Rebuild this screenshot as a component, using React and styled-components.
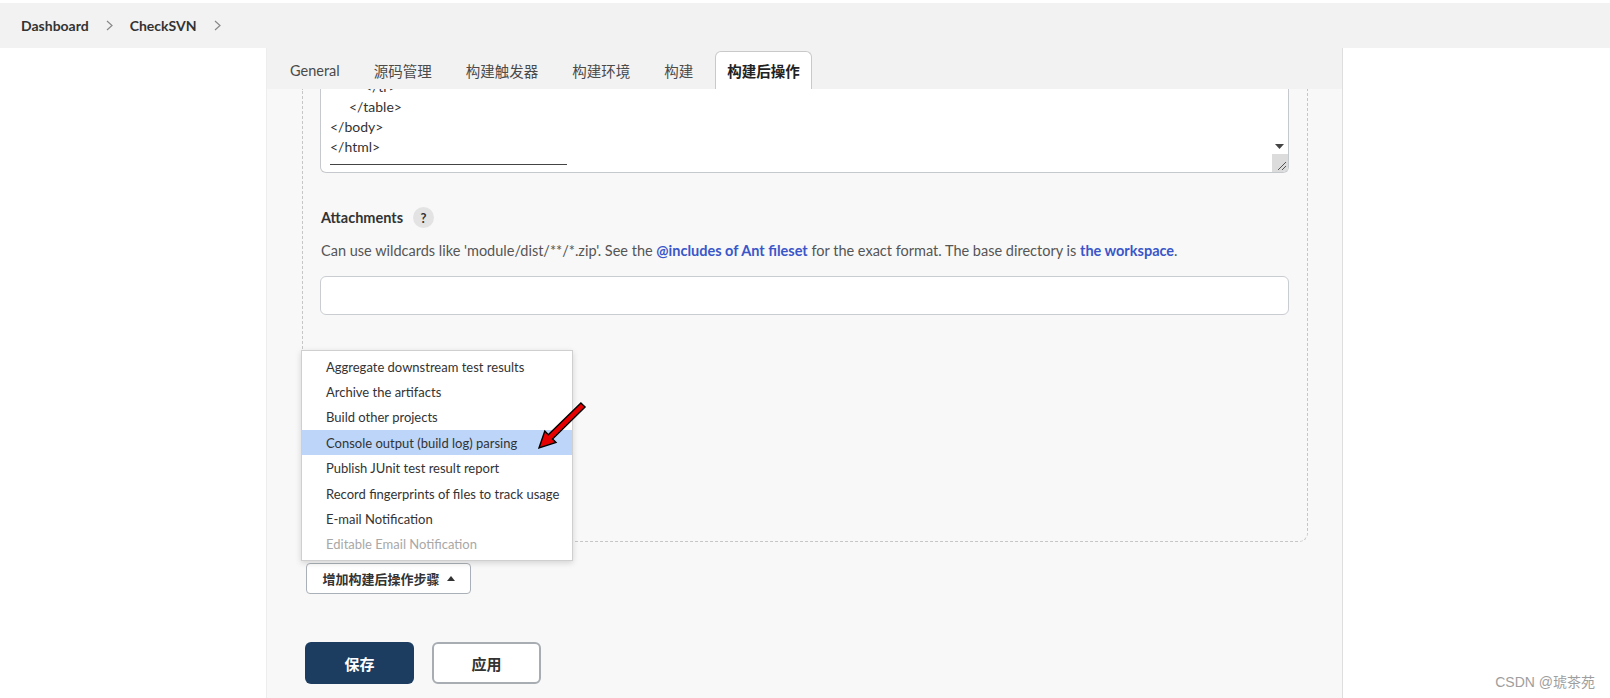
import React from "react";
import styled, { createGlobalStyle } from "styled-components";

const GlobalStyle = createGlobalStyle`
  html, body { margin: 0; padding: 0; background: #ffffff; }
  body {
    font-family: Lato, "Noto Sans CJK SC", sans-serif;
    color: #333;
    width: 1610px;
    height: 698px;
    overflow: hidden;
  }
  * { box-sizing: border-box; }
`;

const Page = styled.div`
  position: relative;
  width: 1610px;
  height: 698px;
  padding-top: 3px;
  display: flex;
  flex-direction: column;
`;

const Breadcrumb = styled.nav`
  height: 45px;
  background: #f2f2f2;
  display: flex;
  align-items: center;
  padding-left: 21px;
  gap: 17px;
  flex-shrink: 0;
`;

const Crumb = styled.span`
  font-weight: 700;
  font-size: 14px;
  color: #333;
`;

const Chevron = () => (
  <svg width="7" height="11" viewBox="0 0 7 11">
    <polyline points="1,1 6,5.5 1,10" fill="none" stroke="#888" strokeWidth="1.2" />
  </svg>
);

const Main = styled.div`
  flex: 1;
  display: flex;
  padding-left: 266px;
  min-height: 0;
`;

const Panel = styled.section`
  width: 1077px;
  background: #f8f8f8;
  border-left: 1px solid #ededed;
  border-right: 1px solid #dedede;
  display: flex;
  flex-direction: column;
`;

const TabBar = styled.div`
  height: 41px;
  background: #f2f2f2;
  display: flex;
  align-items: flex-end;
  padding-left: 11px;
  gap: 10px;
  flex-shrink: 0;
`;

const Tab = styled.div`
  height: 38px;
  display: flex;
  align-items: center;
  padding: 0 11px;
  font-size: 14.5px;
  color: ${(p) => (p.$active ? "#222" : "#4a4a4a")};
  font-weight: ${(p) => (p.$active ? 700 : 400)};
  background: ${(p) => (p.$active ? "#ffffff" : "transparent")};
  border: 1px solid ${(p) => (p.$active ? "#c9c9c9" : "transparent")};
  border-bottom: none;
  border-radius: 6px 6px 0 0;
`;

const Content = styled.div`
  flex: 1;
  padding: 0 34px 0 35px;
  display: flex;
  flex-direction: column;
`;

const Section = styled.div`
  border: 1px dashed #c6c6c6;
  border-top: none;
  border-radius: 0 0 9px 9px;
  padding: 0 18px 226px 17px;
`;

const CodeBox = styled.div`
  height: 84px;
  background: #ffffff;
  border: 1px solid #c5c9ce;
  border-top: none;
  border-radius: 0 0 6px 6px;
  display: flex;
  overflow: hidden;
`;

const CodeViewport = styled.div`
  flex: 1;
  overflow: hidden;
  padding-left: 9px;
`;

const CodeLines = styled.div`
  margin-top: -12px;
  font-size: 14px;
  line-height: 20px;
  color: #333;
`;

const CodeLine = styled.div`
  padding-left: ${(p) => p.$indent || 0}px;
  white-space: pre;
`;

const CodeRule = styled.div`
  width: 237px;
  height: 1px;
  background: #444;
  margin-top: 7px;
`;

const Scrollbar = styled.div`
  width: 17px;
  display: flex;
  flex-direction: column;
  justify-content: flex-end;
  align-items: center;
`;

const ScrollArrow = styled.div`
  height: 14px;
  display: flex;
  align-items: center;
  justify-content: center;
  margin-bottom: 1px;
`;

const Grip = styled.div`
  width: 16px;
  height: 18px;
  background: #dcdcdc;
  display: flex;
  align-items: flex-end;
  justify-content: flex-end;
  padding: 0 2px 2px 0;
`;

const FieldLabel = styled.div`
  margin-top: 34px;
  display: flex;
  align-items: center;
  gap: 10px;
  font-size: 14.5px;
  font-weight: 700;
  line-height: 20px;
  color: #333;
  padding-left: 1px;
`;

const HelpBadge = styled.span`
  width: 21px;
  height: 21px;
  border-radius: 50%;
  background: #e3e3e3;
  color: #333;
  font-size: 13px;
  font-weight: 700;
  display: inline-flex;
  align-items: center;
  justify-content: center;
`;

const Description = styled.div`
  margin-top: 13px;
  font-size: 14.5px;
  line-height: 20px;
  color: #555;
  padding-left: 1px;
`;

const Link = styled.a`
  color: #3a56c8;
  font-weight: 700;
  text-decoration: none;
`;

const TextInput = styled.div`
  margin-top: 15px;
  height: 39px;
  background: #ffffff;
  border: 1.5px solid #c9cdd2;
  border-radius: 6px;
`;

const AddWrap = styled.div`
  position: relative;
  margin-top: 21px;
  align-self: flex-start;
  margin-left: 4px;
`;

const AddButton = styled.button`
  height: 31px;
  width: 165px;
  background: #ffffff;
  border: 1.5px solid #a9b0b7;
  border-radius: 4px;
  font-family: inherit;
  font-size: 13px;
  font-weight: 700;
  color: #333;
  display: flex;
  align-items: center;
  justify-content: center;
  gap: 7px;
  padding: 0;
`;

const Menu = styled.ul`
  position: absolute;
  left: -5px;
  bottom: calc(100% + 2px);
  width: 272px;
  margin: 0;
  padding: 3px 0;
  list-style: none;
  background: #ffffff;
  border: 1px solid #cfcfcf;
  box-shadow: 0 2px 6px rgba(0, 0, 0, 0.15);
  z-index: 5;
`;

const MenuItem = styled.li`
  height: 25.4px;
  display: flex;
  align-items: center;
  padding-left: 24px;
  font-size: 13px;
  color: ${(p) => (p.$disabled ? "#a8a8a8" : "#333")};
  background: ${(p) => (p.$selected ? "#bcd5f8" : "transparent")};
  white-space: nowrap;
`;

const Annotation = styled.svg`
  position: absolute;
  left: 229px;
  top: 49px;
  overflow: visible;
  pointer-events: none;
`;

const ButtonRow = styled.div`
  margin-top: 48px;
  display: flex;
  gap: 18px;
  margin-left: 3px;
`;

const ActionButton = styled.button`
  width: 109px;
  height: 42px;
  border-radius: 6px;
  font-family: inherit;
  font-size: 15px;
  font-weight: 700;
  padding: 0;
  color: ${(p) => (p.$primary ? "#ffffff" : "#333")};
  background: ${(p) => (p.$primary ? "#1d3d60" : "#ffffff")};
  border: ${(p) => (p.$primary ? "none" : "2px solid #a7adb3")};
`;

const Watermark = styled.div`
  position: absolute;
  right: 15px;
  bottom: 7px;
  font-family: "Liberation Sans", "Noto Sans CJK SC", sans-serif;
  font-size: 14px;
  color: #9e9e9e;
`;

const tabs = ["General", "源码管理", "构建触发器", "构建环境", "构建", "构建后操作"];

const menuItems = [
  "Aggregate downstream test results",
  "Archive the artifacts",
  "Build other projects",
  "Console output (build log) parsing",
  "Publish JUnit test result report",
  "Record fingerprints of files to track usage",
  "E-mail Notification",
  "Editable Email Notification",
];

export default function App() {
  return (
    <>
      <GlobalStyle />
      <Page>
        <Breadcrumb>
          <Crumb>Dashboard</Crumb>
          <Chevron />
          <Crumb>CheckSVN</Crumb>
          <Chevron />
        </Breadcrumb>
        <Main>
          <Panel>
            <TabBar>
              {tabs.map((t, i) => (
                <Tab key={t} $active={i === tabs.length - 1}>
                  {t}
                </Tab>
              ))}
            </TabBar>
            <Content>
              <Section>
                <CodeBox>
                  <CodeViewport>
                    <CodeLines>
                      <CodeLine $indent={34}>{"</tr>"}</CodeLine>
                      <CodeLine $indent={19}>{"</table>"}</CodeLine>
                      <CodeLine>{"</body>"}</CodeLine>
                      <CodeLine>{"</html>"}</CodeLine>
                      <CodeRule />
                    </CodeLines>
                  </CodeViewport>
                  <Scrollbar>
                    <ScrollArrow>
                      <svg width="9" height="5" viewBox="0 0 9 5">
                        <polygon points="0,0 9,0 4.5,5" fill="#444" />
                      </svg>
                    </ScrollArrow>
                    <Grip>
                      <svg width="9" height="9" viewBox="0 0 9 9">
                        <line x1="1" y1="9" x2="9" y2="1" stroke="#555" strokeWidth="1" />
                        <line x1="5" y1="9" x2="9" y2="5" stroke="#555" strokeWidth="1" />
                      </svg>
                    </Grip>
                  </Scrollbar>
                </CodeBox>
                <FieldLabel>
                  Attachments
                  <HelpBadge>?</HelpBadge>
                </FieldLabel>
                <Description>
                  Can use wildcards like 'module/dist/**/*.zip'. See the{" "}
                  <Link>@includes of Ant fileset</Link> for the exact format. The base directory is{" "}
                  <Link>the workspace</Link>.
                </Description>
                <TextInput />
              </Section>
              <AddWrap>
                <Menu>
                  {menuItems.map((m, i) => (
                    <MenuItem key={m} $selected={i === 3} $disabled={i === 7}>
                      {m}
                    </MenuItem>
                  ))}
                  <Annotation width="60" height="55" viewBox="0 0 60 55">
                    <polygon
                      points="49.9,2.9 54.1,7.1 21.5,38.9 25,42.5 8,48 13.8,31.1 17.3,34.7"
                      fill="#e60000"
                      stroke="#000"
                      strokeWidth="1.4"
                      strokeLinejoin="miter"
                    />
                  </Annotation>
                </Menu>
                <AddButton>
                  增加构建后操作步骤
                  <svg width="8" height="5" viewBox="0 0 8 5">
                    <polygon points="0,5 8,5 4,0" fill="#333" />
                  </svg>
                </AddButton>
              </AddWrap>
              <ButtonRow>
                <ActionButton $primary>保存</ActionButton>
                <ActionButton>应用</ActionButton>
              </ButtonRow>
            </Content>
          </Panel>
        </Main>
        <Watermark>CSDN @琥茶苑</Watermark>
      </Page>
    </>
  );
}
